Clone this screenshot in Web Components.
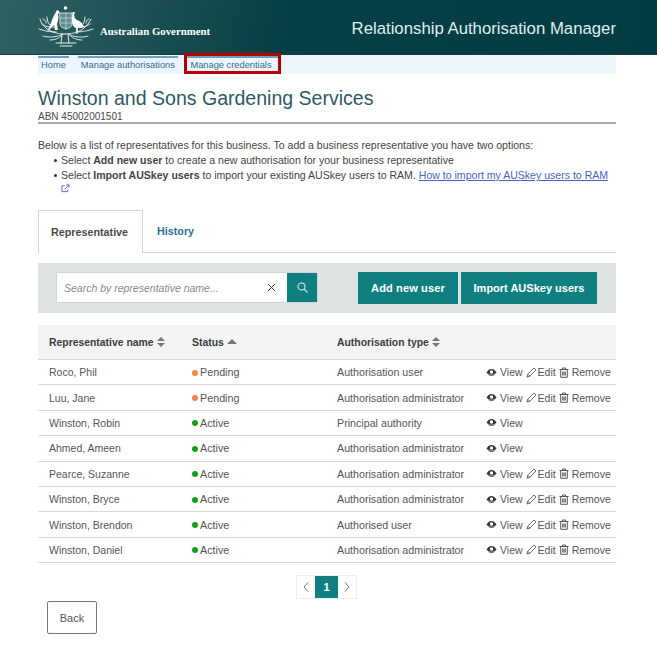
<!DOCTYPE html>
<html lang="en">
<head>
<meta charset="utf-8">
<title>Relationship Authorisation Manager</title>
<style>
  body { margin: 0; background: #fff; font-family: "Liberation Sans", Arial, sans-serif; color: #3d3d3d; }
</style>
</head>
<body>
<ram-header></ram-header>
<ram-nav></ram-nav>
<ram-title name="Winston and Sons Gardening Services" abn="ABN 45002001501"></ram-title>
<ram-intro></ram-intro>
<ram-tabs></ram-tabs>
<ram-toolbar></ram-toolbar>
<ram-table></ram-table>
<ram-pager></ram-pager>
<ram-back></ram-back>

<script>
class RamHeader extends HTMLElement {
  constructor() {
    super();
    this.attachShadow({ mode: 'open' });
    this.shadowRoot.innerHTML = `
      <style>
        :host {
          display: flex;
          align-items: center;
          justify-content: space-between;
          box-sizing: border-box;
          height: 55px;
          padding: 0 41px 0 38px;
          background: linear-gradient(100deg, #2f6263 0%, #1c5052 22%, #063f44 44%, #023c42 100%);
          border-bottom: 1px solid #1d3b3d;
          color: #fff;
        }
        .brand { display: flex; align-items: center; gap: 6px; }
        svg { width: 56px; height: 44px; display: block; }
        .gov {
          font-family: "Liberation Serif", serif;
          font-weight: 700;
          font-size: 10.800px;
          margin-top: 8px;
        }
        .app {
          font-family: "Liberation Sans", sans-serif;
          font-size: 16.750px;
          color: #dfeeee;
          margin-top: 3px;
        }
      </style>
      <div class="brand">
        <svg viewBox="0 0 56 44" fill="none" stroke="#e8f0f0" stroke-width="1" stroke-linecap="round">
          <circle cx="27.500" cy="3" r="1.800" fill="#fff" stroke="none"/>
          <path d="M22 8h12v11c0 3-3 4-6 5-3-1-6-2-6-5z" fill="#5f8c8c" stroke="#fff" stroke-width=".7"/>
          <path d="M28 8v16M22 13h12M22 18h12" stroke="#dfeaea" stroke-width=".6"/>
          <path d="M19 5l2 1 .5 2-1.500 1c1 3 0 7-1 10l1 6h-3l-1-5-7 7 4-9c1-4 3-8 5-11z" fill="#fff" stroke="none"/>
          <path d="M34.500 7h2l.5 1.500-1 .5c0 3 1 5 3 6 3 1 6 3 7 7-2 1-4 1-6 1l-.5 6h-1l-.5-6c-3-1-4-4-4-8z" fill="#fff" stroke="none"/>
          <g stroke-width="1" stroke-dasharray="1.500 .8">
            <path d="M27 29c-6 0-13-1-19-6-3-3-5-5-6-9"/>
            <path d="M27 29c6 0 13-1 19-6 3-3 5-5 7-9"/>
            <path d="M4 19c4 3 8 3 12 3M1 24c6 2 11 3 18 3M52 19c-4 3-8 3-12 3M55 24c-6 2-11 3-18 3"/>
            <path d="M9 12c0 3 1 6 3 8M47 12c0 3-1 6-3 8M5 31c6 2 14 1 20-2M50 31c-6 2-14 1-20-2"/>
            <path d="M12 35c5 0 10-2 13-6M44 35c-5 0-10-2-13-6M5 14c2 1 3 2 3 4M51 14c-2 1-3 2-3 4"/>
          </g>
          <path d="M18 38h20M22 41h12M24 30l-1 8M30 30l1 8" stroke-width="1"/>
        </svg>
        <span class="gov">Australian Government</span>
      </div>
      <div class="app">Relationship Authorisation Manager</div>
    `;
  }
}
customElements.define('ram-header', RamHeader);

class RamNav extends HTMLElement {
  constructor() {
    super();
    this.attachShadow({ mode: 'open' });
    this.shadowRoot.innerHTML = `
      <style>
        :host {
          display: flex;
          align-items: flex-start;
          gap: 9px;
          box-sizing: border-box;
          height: 19px;
          padding-top: 1px;
          margin: 0 41px 0 38px;
          background: #edf5fc;
          font-size: 9.300px;
        }
        a {
          box-sizing: border-box;
          height: 15px;
          padding: 2px 3px 0;
          border-top: 2px solid #6f9dbb;
          color: #2f6f8f;
          text-decoration: none;
          white-space: nowrap;
        }
        a.flagged { width: 91px; margin-left: .5px; outline: 3px solid #b40000; }
      </style>
      <a href="#">Home</a>
      <a href="#">Manage authorisations</a>
      <a href="#" class="flagged">Manage credentials</a>
    `;
  }
}
customElements.define('ram-nav', RamNav);

class RamTitle extends HTMLElement {
  constructor() {
    super();
    this.attachShadow({ mode: 'open' });
    this.shadowRoot.innerHTML = `
      <style>
        :host {
          display: block;
          margin: 11px 41px 0 38px;
          border-bottom: 2px solid #a9a9a9;
          height: 37px;
        }
        h1 {
          margin: 0;
          font-weight: 400;
          font-size: 19.550px;
          line-height: 26px;
          color: #2d5a62;
        }
        p { margin: 0; font-size: 10px; line-height: 11px; color: #4a4a4a; }
      </style>
      <h1>${this.getAttribute('name')}</h1>
      <p>${this.getAttribute('abn')}</p>
    `;
  }
}
customElements.define('ram-title', RamTitle);

class RamIntro extends HTMLElement {
  constructor() {
    super();
    this.attachShadow({ mode: 'open' });
    this.shadowRoot.innerHTML = `
      <style>
        :host {
          display: block;
          margin: 14px 41px 0 38px;
          font-size: 10.550px;
          line-height: 15px;
          color: #444;
        }
        p { margin: 0; }
        ul { margin: 0; padding: 0 0 0 16px; list-style: none; }
        li { position: relative; padding-left: 7px; }
        li::before {
          content: "";
          position: absolute;
          left: 0;
          top: 6px;
          width: 3px;
          height: 3px;
          border-radius: 50%;
          background: #333;
        }
        a { color: #4a63c4; }
        svg { display: block; width: 9px; height: 9px; margin-top: 1px; }
      </style>
      <p>Below is a list of representatives for this business. To add a business representative you have two options:</p>
      <ul>
        <li>Select <b>Add new user</b> to create a new authorisation for your business representative</li>
        <li>Select <b>Import AUSkey users</b> to import your existing AUSkey users to RAM. <a href="#">How to import my AUSkey users to RAM</a>
          <svg viewBox="0 0 10 10" fill="none" stroke="#4a63c4" stroke-width="1"><path d="M7.500 6v2.500h-6.500v-6.500h3M4 6l5-5M6 1h3v3"/></svg>
        </li>
      </ul>
    `;
  }
}
customElements.define('ram-intro', RamIntro);

class RamTabs extends HTMLElement {
  constructor() {
    super();
    this.attachShadow({ mode: 'open' });
    this.shadowRoot.innerHTML = `
      <style>
        :host {
          display: flex;
          align-items: stretch;
          box-sizing: border-box;
          height: 43px;
          margin: 17px 41px 0 38px;
          border-bottom: 1px solid #d5d5d5;
          font-size: 10.750px;
          font-weight: 700;
        }
        div {
          display: flex;
          align-items: center;
          box-sizing: border-box;
          padding: 0 12px;
        }
        .active {
          height: 43px;
          width: 105px;
          background: #fff;
          border: 1px solid #d5d5d5;
          border-bottom: 0;
          color: #4a4a4a;
        }
        .other { color: #2b6f96; padding-left: 14px; }
      </style>
      <div class="active">Representative</div>
      <div class="other">History</div>
    `;
  }
}
customElements.define('ram-tabs', RamTabs);

class RamToolbar extends HTMLElement {
  constructor() {
    super();
    this.attachShadow({ mode: 'open' });
    this.shadowRoot.innerHTML = `
      <style>
        :host {
          display: flex;
          align-items: center;
          box-sizing: border-box;
          height: 50px;
          margin: 10px 41px 0 38px;
          padding: 0 19px 1px 19px;
          background: #dfe2e2;
        }
        .search { display: flex; width: 260px; height: 29px; box-shadow: 0 0 1px #999; }
        .field {
          flex: 1;
          display: flex;
          align-items: center;
          justify-content: space-between;
          padding: 0 11px 0 7px;
          background: #fff;
          font-size: 10.500px;
          font-style: italic;
          color: #8a8a8a;
        }
        .go {
          display: flex;
          align-items: center;
          justify-content: center;
          width: 30px;
          background: #0f7f82;
        }
        .actions { margin-left: auto; display: flex; gap: 3px; }
        button {
          height: 32px;
          border: 0;
          padding: 0;
          background: #0f7f82;
          color: #fff;
          font: 700 11px "Liberation Sans", sans-serif;
          letter-spacing: 0.150px;
        }
        .add { width: 100px; }
        .imp { width: 136px; letter-spacing: 0; }
      </style>
      <div class="search">
        <div class="field">
          <span>Search by representative name...</span>
          <svg width="9" height="9" viewBox="0 0 9 9" stroke="#333" stroke-width="1"><path d="M1 1l7 7M8 1l-7 7"/></svg>
        </div>
        <div class="go">
          <svg width="11" height="11" viewBox="0 0 11 11" fill="none" stroke="#cfe8e8" stroke-width="1.100"><circle cx="4.500" cy="4.500" r="3.500"/><path d="M7 7l3.500 3.500"/></svg>
        </div>
      </div>
      <div class="actions">
        <button class="add">Add new user</button>
        <button class="imp">Import AUSkey users</button>
      </div>
    `;
  }
}
customElements.define('ram-toolbar', RamToolbar);

const EYE = `<svg width="11" height="9" viewBox="0 0 11 9"><path d="M.5 4.500C2 2 3.700 1 5.500 1s3.500 1 5 3.500c-1.500 2.500-3.200 3.500-5 3.500S2 7 .5 4.500z" fill="#333"/><circle cx="5.500" cy="4" r="1.700" fill="#fff"/><path d="M1.500 5.500c2.500 2 5.500 2 8 0" stroke="#fff" stroke-width=".6" fill="none"/></svg>`;
const PEN = `<svg width="11" height="11" viewBox="0 0 11 11" fill="none" stroke="#444" stroke-width=".8"><path d="M1 10l.7-2.800L8 1l2 2-6.200 6.300zM1.700 7.200l2.100 2.100"/></svg>`;
const BIN = `<svg width="10" height="11" viewBox="0 0 10 11" fill="none" stroke="#444" stroke-width=".9"><path d="M.5 2.500h9M3.500 2.500v-1.500h3v1.500M1.700 2.500v7.800h6.600v-7.800M3.700 4.500v4M5 4.500v4M6.300 4.500v4"/></svg>`;
const SORT = `<svg width="8" height="10" viewBox="0 0 8 10" fill="#777"><path d="M4 0l4 4H0zM4 10L0 6h8z"/></svg>`;
const SORT_UP = `<svg width="10" height="6" viewBox="0 0 10 6" fill="#777"><path d="M5 0l5 5H0z"/></svg>`;

class RamRow extends HTMLElement {
  constructor() {
    super();
    this.attachShadow({ mode: 'open' });
  }
  connectedCallback() {
    const status = this.getAttribute('status');
    const full = this.hasAttribute('full');
    this.shadowRoot.innerHTML = `
      <style>
        :host {
          display: grid;
          grid-template-columns: 154px 145px 149px 130px;
          align-items: center;
          box-sizing: border-box;
          height: 25.400px;
          border-bottom: 1px solid #d9d9d9;
          font-size: 10.500px;
          color: #555;
        }
        .name { padding-left: 11px; }
        .status { display: flex; align-items: center; gap: 2px; font-size: 10.750px; }
        .type { font-size: 10.700px; }
        .dot { width: 6px; height: 6px; border-radius: 50%; margin-top: 1px; }
        .Pending .dot { background: #f58445; }
        .Active .dot { background: #12a01c; }
        .acts { display: flex; align-items: center; gap: 3px; white-space: nowrap; }
        .acts span { display: flex; align-items: center; gap: 3px; }
        .acts .pen { gap: 1px; }
      </style>
      <div class="name">${this.getAttribute('name')}</div>
      <div class="status ${status}"><i class="dot"></i>${status}</div>
      <div class="type">${this.getAttribute('type')}</div>
      <div class="acts">
        <span>${EYE}View</span>
        ${full ? `<span class="pen">${PEN}Edit</span><span>${BIN}Remove</span>` : ''}
      </div>
    `;
  }
}
customElements.define('ram-row', RamRow);

class RamTable extends HTMLElement {
  constructor() {
    super();
    this.attachShadow({ mode: 'open' });
    const rows = [
      ['Roco, Phil', 'Pending', 'Authorisation user', true],
      ['Luu, Jane', 'Pending', 'Authorisation administrator', true],
      ['Winston, Robin', 'Active', 'Principal authority', false],
      ['Ahmed, Ameen', 'Active', 'Authorisation administrator', false],
      ['Pearce, Suzanne', 'Active', 'Authorisation administrator', true],
      ['Winston, Bryce', 'Active', 'Authorisation administrator', true],
      ['Winston, Brendon', 'Active', 'Authorised user', true],
      ['Winston, Daniel', 'Active', 'Authorisation administrator', true]
    ];
    this.shadowRoot.innerHTML = `
      <style>
        :host { display: block; margin: 12px 41px 0 38px; }
        .head {
          display: grid;
          grid-template-columns: 154px 145px 149px 130px;
          align-items: center;
          box-sizing: border-box;
          height: 35px;
          background: #f4f4f4;
          border-bottom: 1px solid #d9d9d9;
          font-size: 10.400px;
          font-weight: 700;
          color: #3d3d3d;
        }
        .head div { display: flex; align-items: center; gap: 3px; }
        .head div:first-child { padding-left: 11px; }
      </style>
      <div class="head">
        <div>Representative name ${SORT}</div>
        <div>Status ${SORT_UP}</div>
        <div>Authorisation type ${SORT}</div>
        <div></div>
      </div>
      ${rows.map(r => `<ram-row name="${r[0]}" status="${r[1]}" type="${r[2]}" ${r[3] ? 'full' : ''}></ram-row>`).join('')}
    `;
  }
}
customElements.define('ram-table', RamTable);

class RamPager extends HTMLElement {
  constructor() {
    super();
    this.attachShadow({ mode: 'open' });
    this.shadowRoot.innerHTML = `
      <style>
        :host {
          display: flex;
          box-sizing: border-box;
          padding-left: 296px;
          margin-top: 12px;
        }
        .box { display: flex; height: 24px; border: 1px solid #eee; box-sizing: border-box; }
        .box div { display: flex; align-items: center; justify-content: center; width: 18px; }
        .box .cur {
          width: 23px;
          background: #0f7f82;
          color: #fff;
          font-weight: 700;
          font-size: 11px;
        }
      </style>
      <div class="box">
        <div><svg width="6" height="10" viewBox="0 0 6 10" fill="none" stroke="#777"><path d="M5 .5L1 5l4 4.500"/></svg></div>
        <div class="cur">1</div>
        <div><svg width="6" height="10" viewBox="0 0 6 10" fill="none" stroke="#777"><path d="M1 .5L5 5l-4 4.500"/></svg></div>
      </div>
    `;
  }
}
customElements.define('ram-pager', RamPager);

class RamBack extends HTMLElement {
  constructor() {
    super();
    this.attachShadow({ mode: 'open' });
    this.shadowRoot.innerHTML = `
      <style>
        :host { display: block; margin: 2px 0 0 47px; }
        button {
          display: block;
          width: 50px;
          height: 33px;
          padding: 0;
          background: #fff;
          border: 1px solid #777;
          border-radius: 2px;
          color: #555;
          font: 11px "Liberation Sans", sans-serif;
        }
      </style>
      <button>Back</button>
    `;
  }
}
customElements.define('ram-back', RamBack);
</script>
</body>
</html>
